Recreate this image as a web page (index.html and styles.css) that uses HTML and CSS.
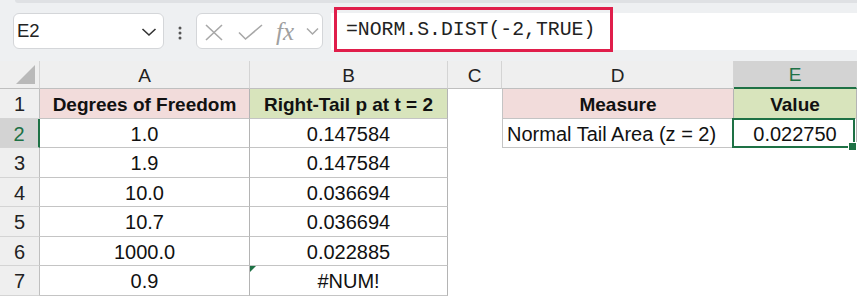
FILE: index.html
```html
<!DOCTYPE html>
<html lang="en">
<head>
    <meta charset="UTF-8">
    <title>NORM.S.DIST</title>
    <link rel="stylesheet" href="styles.css">
</head>
<body>
<div class="toolbar">
    <div class="shade"></div>
    <div class="namebox">
        <span>E2</span>
        <svg class="chev" width="16" height="10" viewBox="0 0 16 10"><path d="M1.5 2 L8 8 L14.5 2" fill="none" stroke="#333" stroke-width="1.6"/></svg>
    </div>
    <div class="dots">
        <svg width="32" height="36" viewBox="0 0 32 36"><circle cx="16" cy="15" r="1.5" fill="#555"/><circle cx="16" cy="20" r="1.5" fill="#555"/><circle cx="16" cy="25" r="1.5" fill="#555"/></svg>
    </div>
    <div class="fbox">
        <svg width="127" height="36" viewBox="0 0 127 36">
            <path d="M10 12 L26 27 M26 12 L10 27" stroke="#a8a8a8" stroke-width="1.6" fill="none"/>
            <path d="M43 19.5 L49.5 26 L66 12" stroke="#a8a8a8" stroke-width="1.6" fill="none"/>
            <text x="80" y="27" class="fx">fx</text>
            <path d="M111 15.5 L116.5 21 L122 15.5" stroke="#a8a8a8" stroke-width="1.5" fill="none"/>
        </svg>
    </div>
    <div class="formula">
        <div class="mark">=NORM.S.DIST(-2,TRUE)</div>
    </div>
</div>

<div class="sheet">
    <div class="hd corner"><div class="tri"></div></div>
    <div class="hd">A</div>
    <div class="hd">B</div>
    <div class="hd">C</div>
    <div class="hd">D</div>
    <div class="hd sel">E</div>

    <div class="rh">1</div>
    <div class="c t bold pink">Degrees of Freedom</div>
    <div class="c t bold green">Right-Tail p at t = 2</div>
    <div class="c"></div>
    <div class="c t tl bold pink">Measure</div>
    <div class="c t bold green">Value</div>

    <div class="rh sel">2</div>
    <div class="c t">1.0</div>
    <div class="c t">0.147584</div>
    <div class="c"></div>
    <div class="c t tl left">Normal Tail Area (z = 2)</div>
    <div class="c t active">0.022750</div>

    <div class="rh">3</div>
    <div class="c t">1.9</div>
    <div class="c t">0.147584</div>
    <div class="c"></div><div class="c"></div><div class="c"></div>

    <div class="rh">4</div>
    <div class="c t">10.0</div>
    <div class="c t">0.036694</div>
    <div class="c"></div><div class="c"></div><div class="c"></div>

    <div class="rh">5</div>
    <div class="c t">10.7</div>
    <div class="c t">0.036694</div>
    <div class="c"></div><div class="c"></div><div class="c"></div>

    <div class="rh">6</div>
    <div class="c t">1000.0</div>
    <div class="c t">0.022885</div>
    <div class="c"></div><div class="c"></div><div class="c"></div>

    <div class="rh">7</div>
    <div class="c t">0.9</div>
    <div class="c t flag">#NUM!</div>
    <div class="c"></div><div class="c"></div><div class="c"></div>
</div>
</body>
</html>
```
FILE: styles.css
```css
/* Excel-like sheet */
body {
    margin: 0;
    background-color: #ffffff;
    font-family: "Liberation Sans", Arial, sans-serif;
    color: #111;
}

.toolbar {
    position: relative;
    height: 61px;
    background-color: #eef0f2;
    display: flex;
    align-items: flex-start;
    padding: 13px 0 0 13px;
    box-sizing: border-box;
}

.shade {
    position: absolute;
    top: 0;
    left: 15px;
    right: 0;
    height: 3px;
    background-color: #dfe1e4;
    border-bottom-left-radius: 3px;
}

.namebox {
    width: 151px;
    height: 36px;
    box-sizing: border-box;
    background-color: white;
    border: 1px solid #d4d6d9;
    border-radius: 6px;
    display: flex;
    align-items: center;
    justify-content: space-between;
    padding: 0 6px 0 3px;
    font-size: 18.5px;
    color: #222;
}

.namebox .chev {
    margin-top: 2px;
}

.dots {
    width: 32px;
    height: 36px;
}

.fbox {
    width: 127px;
    height: 36px;
    box-sizing: border-box;
    background-color: white;
    border: 1px solid #d4d6d9;
    border-radius: 6px;
    overflow: hidden;
}

.fbox svg {
    display: block;
    margin: -1px 0 0 -1px;
}

.fx {
    font-family: "Liberation Serif", serif;
    font-style: italic;
    font-size: 25px;
    fill: #a0a0a0;
}

.formula {
    flex: 1;
    height: 37px;
    margin-left: 8px;
    background-color: white;
    display: flex;
    align-items: flex-start;
}

.mark {
    margin: -6px 0 0 3px;
    width: 279px;
    height: 45px;
    box-sizing: border-box;
    border: 3px solid #e01e4b;
    padding-left: 9px;
    display: flex;
    align-items: center;
    font-family: "Liberation Mono", monospace;
    font-size: 19.8px;
    color: #222;
}

/* Grid */
.sheet {
    display: grid;
    grid-template-columns: 40px 210px 198px 54px 232px 123px;
    grid-template-rows: 28px 30px 29px 30px 29px 30px 29px 30px;
}

.hd, .rh, .c {
    box-sizing: border-box;
    display: flex;
    align-items: center;
    justify-content: center;
    font-size: 19px;
}

.hd {
    background-color: #efefef;
    border-right: 1px solid #d4d4d4;
    border-bottom: 1px solid #bfbfbf;
    color: #222;
    padding-top: 2px;
}

.hd.sel {
    background-color: #d3d3d3;
    color: #1e7145;
    border-bottom: 2px solid #1e7145;
}

.corner {
    align-items: flex-end;
    justify-content: flex-end;
    padding: 0 4px 4px 0;
}

.tri {
    width: 0;
    height: 0;
    border-left: 19px solid transparent;
    border-bottom: 19px solid #b9b9b9;
}

.rh {
    background-color: #efefef;
    border-right: 1px solid #bfbfbf;
    border-bottom: 1px solid #d4d4d4;
    color: #222;
    padding-top: 2px;
    font-size: 20px;
}

.rh.sel {
    background-color: #d3d3d3;
    color: #1e7145;
    border-right: 2px solid #1e7145;
}

.c {
    font-size: 20px;
    padding-top: 2px;
}

.c.t {
    border-right: 1px solid #b4b4b4;
    border-bottom: 1px solid #c4c4c4;
}

.c.tl {
    border-left: 1px solid #c4c4c4;
}

.bold {
    font-weight: bold;
    font-size: 19px;
}

.pink {
    background-color: #f2dcdb;
}

.green {
    background-color: #d8e4bc;
}

.left {
    justify-content: flex-start;
    padding-left: 4px;
}

.active {
    position: relative;
}

.active::before {
    content: "";
    position: absolute;
    left: -2px;
    top: -1px;
    right: 1px;
    bottom: -1px;
    border: 2px solid #1e7145;
}

.active::after {
    content: "";
    position: absolute;
    right: -1px;
    bottom: -4px;
    width: 7px;
    height: 7px;
    background-color: #1e7145;
    border: 1px solid white;
}

.flag {
    position: relative;
}

.flag::before {
    content: "";
    position: absolute;
    left: 0;
    top: 0;
    border-top: 6px solid #1e7145;
    border-right: 6px solid transparent;
}
```
